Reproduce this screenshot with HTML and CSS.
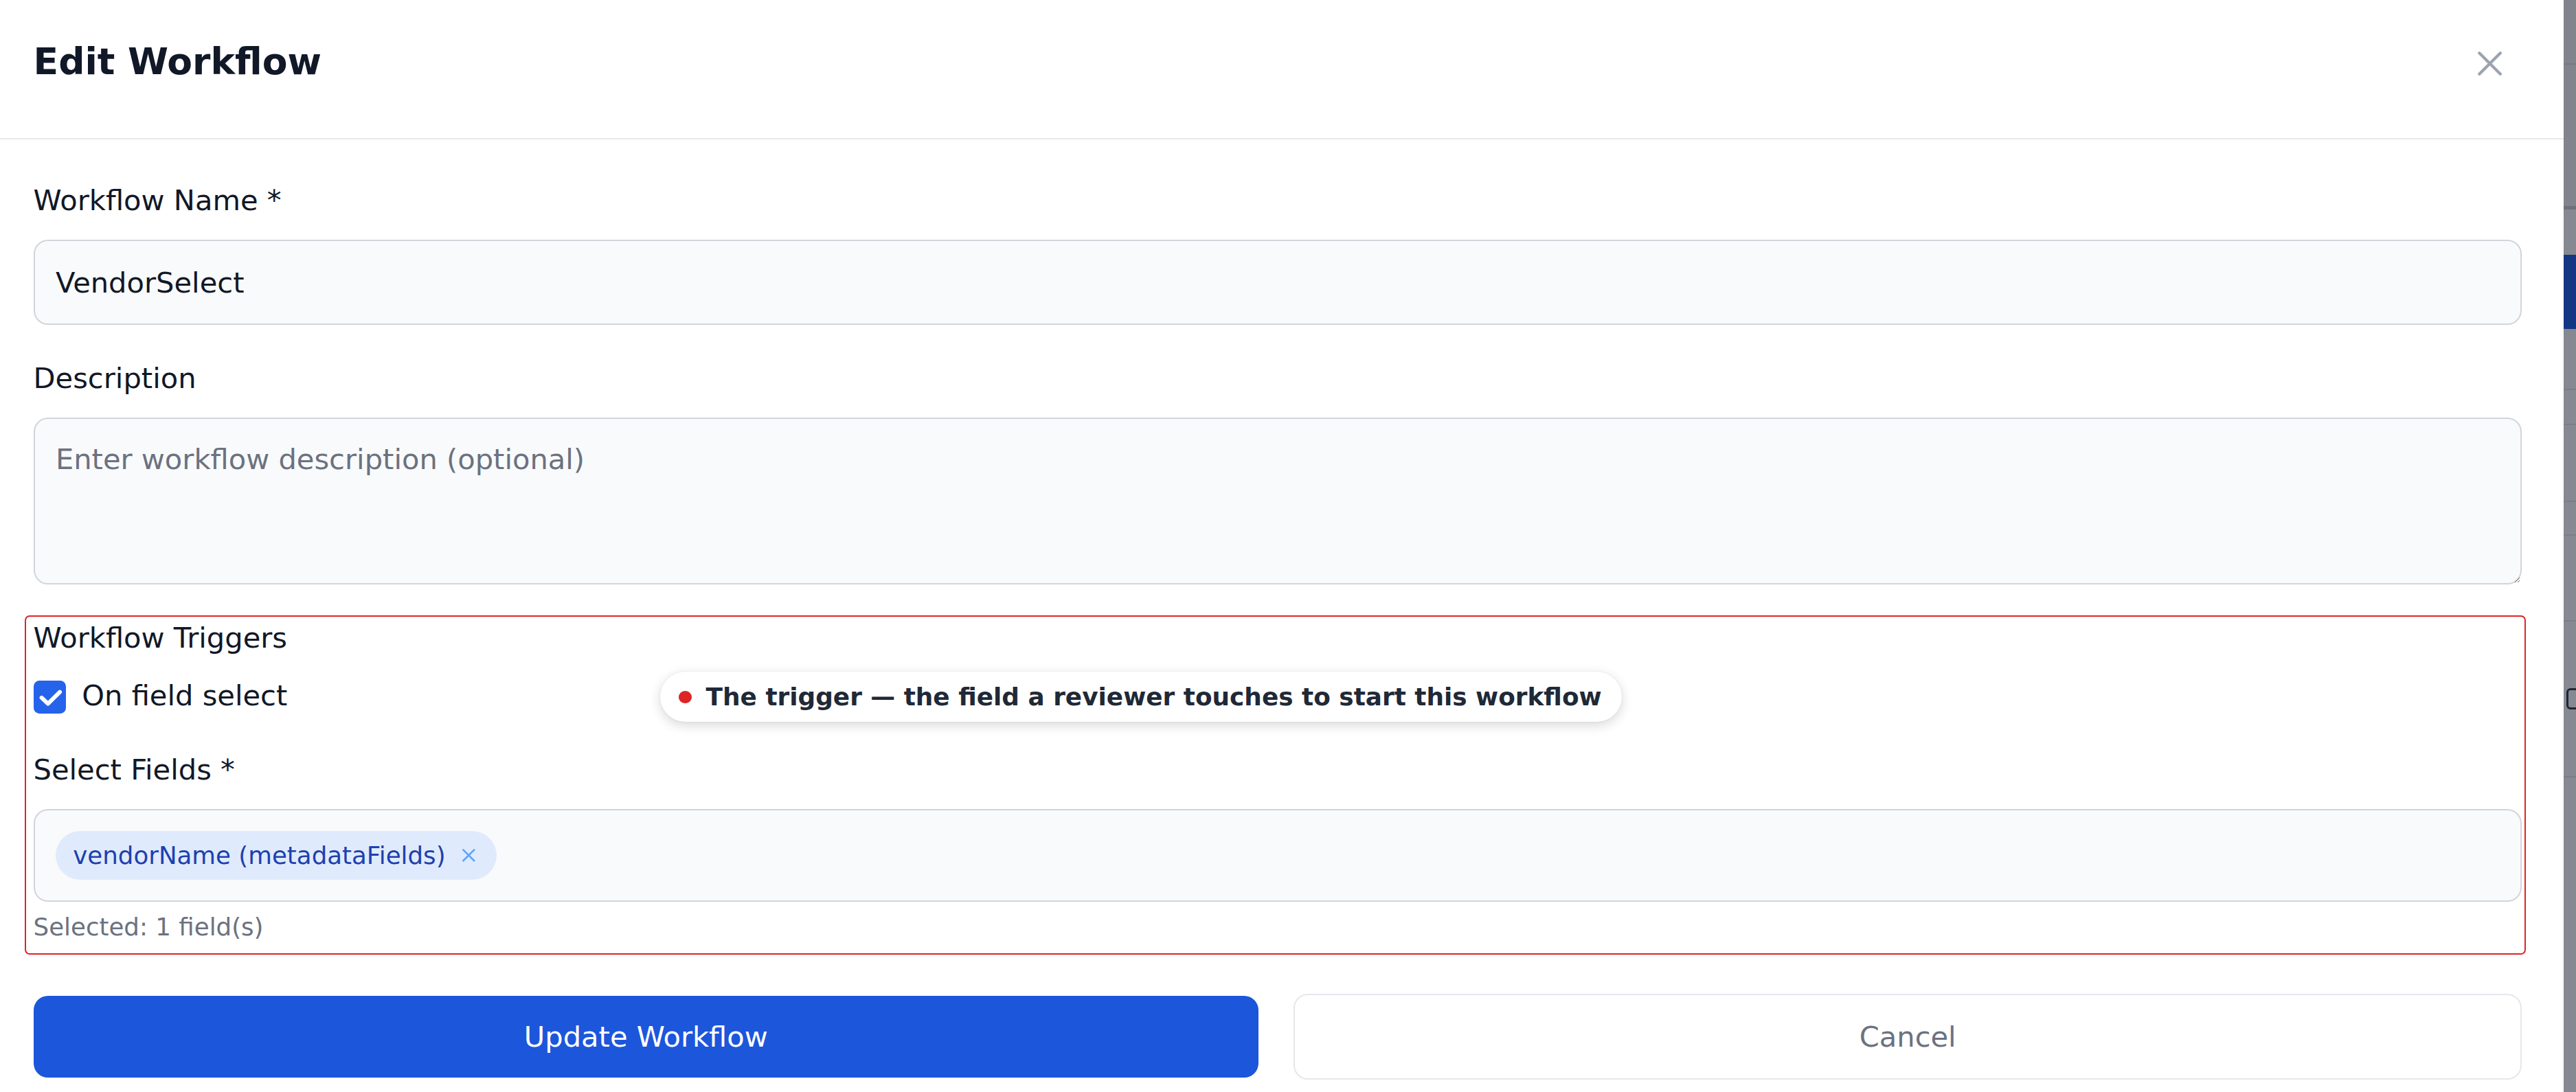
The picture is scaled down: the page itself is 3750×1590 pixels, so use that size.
FILE: index.html
```html
<!DOCTYPE html>
<html lang="en">
<head>
    <meta charset="UTF-8">
    <meta name="viewport" content="width=device-width, initial-scale=1.0">
    <title>Edit Workflow</title>
    <link rel="stylesheet" href="styles.css">
</head>
<body>
    <div class="screen">
        <div class="modal">
            <div class="modal-header">
                <h2>Edit Workflow</h2>
                <button class="close-btn" type="button" aria-label="Close">
                    <svg viewBox="0 0 15 15"><path d="M1 1L14 14M14 1L1 14"/></svg>
                </button>
            </div>

            <form class="modal-body">
                <div class="field">
                    <label class="field-label">Workflow Name *</label>
                    <input class="text-input" type="text" value="VendorSelect">
                </div>

                <div class="field">
                    <label class="field-label">Description</label>
                    <textarea class="text-input text-area" placeholder="Enter workflow description (optional)"></textarea>
                </div>

                <div class="triggers">
                    <div class="section-title">Workflow Triggers</div>
                    <div class="check-row">
                        <span class="checkbox">
                            <svg viewBox="0 0 20 20"><path d="M4.9 10.5L8.8 14.2L16.1 7"/></svg>
                        </span>
                        <span>On field select</span>
                        <div class="callout">
                            <span class="callout-dot"></span>
                            The trigger — the field a reviewer touches to start this workflow
                        </div>
                    </div>

                    <label class="field-label">Select Fields *</label>
                    <div class="multi-select">
                        <span class="chip">
                            vendorName (metadataFields)
                            <svg viewBox="0 0 9 9"><path d="M0.7 0.7L8.3 8.3M8.3 0.7L0.7 8.3"/></svg>
                        </span>
                    </div>
                    <p class="hint">Selected: 1 field(s)</p>
                </div>

                <div class="actions">
                    <button class="btn btn-primary" type="button">Update Workflow</button>
                    <button class="btn btn-secondary" type="button">Cancel</button>
                </div>
            </form>
        </div>

        <div class="backdrop">
            <div class="bp bp-top"></div>
            <div class="bp bp-rule"></div>
            <div class="bp bp-gap"></div>
            <div class="bp bp-bar"></div>
            <div class="bp bp-row" style="height: 37.4px"></div>
            <div class="bp bp-row" style="height: 21.3px"></div>
            <div class="bp bp-row" style="height: 47px"></div>
            <div class="bp bp-row" style="height: 20.2px"></div>
            <div class="bp bp-row" style="height: 52.3px"></div>
            <div class="bp bp-row bp-icon-row"><span class="bp-icon"></span></div>
        </div>
    </div>
</body>
</html>
```

FILE: styles.css
```css
* {
    box-sizing: border-box;
}

html {
    zoom: 2.3915;
}

body {
    margin: 0;
    font-family: "DejaVu Sans", "Noto Sans", sans-serif;
    color: #111827;
    background: #fff;
}

.screen {
    display: flex;
    height: 665px;
    overflow: hidden;
}

.modal {
    width: 1560.7px;
    flex-shrink: 0;
    background: #fff;
}

.modal-header {
    display: flex;
    align-items: center;
    justify-content: space-between;
    height: 85px;
    padding: 0 37.9px 8.6px 20.3px;
    border-bottom: 1px solid #e5e7eb;
}

.modal-header h2 {
    margin: 0;
    font-size: 22.4px;
    line-height: 30px;
    font-weight: 700;
    color: #111827;
}

.close-btn {
    display: block;
    width: 14.7px;
    height: 14.7px;
    margin-top: 2px;
    padding: 0;
    border: 0;
    background: none;
    cursor: pointer;
}

.close-btn svg {
    display: block;
    width: 100%;
    height: 100%;
    fill: none;
    stroke: #9ca3af;
    stroke-width: 1.8;
    stroke-linecap: round;
}

.modal-body {
    padding: 24.2px 25.7px 0 20.3px;
}

.field {
    margin-bottom: 19.6px;
}

.field-label {
    display: block;
    margin-bottom: 10.8px;
    font-size: 17.4px;
    line-height: 26.1px;
}

.text-input {
    display: block;
    width: 100%;
    height: 51.6px;
    padding: 11.7px 12.7px;
    font-family: inherit;
    font-size: 17.4px;
    line-height: 26.1px;
    color: #111827;
    background: #f9fafb;
    border: 1px solid #d1d5db;
    border-radius: 8.7px;
    outline: none;
}

.text-input::placeholder {
    color: #6b7280;
    opacity: 1;
}

.text-area {
    height: 101.8px;
    resize: vertical;
}

/* trigger section, boxed in red */
.triggers {
    position: relative;
}

.triggers::after {
    content: "";
    position: absolute;
    top: -1px;
    bottom: -5.9px;
    left: -5.3px;
    right: -2.5px;
    border: 1.2px solid #e02424;
    border-radius: 3px;
    pointer-events: none;
}

.section-title {
    margin-bottom: 9px;
    font-size: 17.4px;
    line-height: 26.1px;
}

.check-row {
    position: relative;
    display: flex;
    align-items: center;
    gap: 9.8px;
    height: 26.1px;
    margin-bottom: 19px;
    font-size: 17.4px;
    line-height: 26.1px;
}

.checkbox {
    display: flex;
    align-items: center;
    justify-content: center;
    width: 19.8px;
    height: 19.8px;
    margin-top: 1.3px;
    background: #2563eb;
    border-radius: 3.5px;
}

.checkbox svg {
    width: 100%;
    height: 100%;
    fill: none;
    stroke: #fff;
    stroke-width: 2.5;
    stroke-linecap: round;
    stroke-linejoin: round;
}

.callout {
    position: absolute;
    left: 381.5px;
    top: -1.7px;
    display: flex;
    align-items: center;
    gap: 8.8px;
    height: 30.7px;
    padding: 0 12.4px 0 11.5px;
    background: #fff;
    border-radius: 16px;
    box-shadow: 0 2px 7px rgba(0, 0, 0, 0.16), 0 0 1px rgba(0, 0, 0, 0.08);
    font-size: 15px;
    font-weight: 700;
    color: #1f2937;
    white-space: nowrap;
}

.callout-dot {
    width: 7.6px;
    height: 7.6px;
    border-radius: 50%;
    background: #dc2626;
}

.multi-select {
    display: flex;
    flex-wrap: wrap;
    gap: 6px;
    padding: 12.4px 12.7px;
    background: #f9fafb;
    border: 1px solid #d1d5db;
    border-radius: 8.7px;
}

.chip {
    display: inline-flex;
    align-items: center;
    gap: 9.7px;
    height: 29.8px;
    padding: 0 12.9px 0 10.6px;
    background: #dfebfd;
    border-radius: 15px;
    font-size: 14.9px;
    color: #1e40af;
}

.chip svg {
    width: 8.6px;
    height: 8.6px;
    fill: none;
    stroke: #60a5fa;
    stroke-width: 1.2;
}

.hint {
    margin: 4.5px 0 0;
    font-size: 14.9px;
    line-height: 21.7px;
    color: #6b7280;
}

.actions {
    display: flex;
    align-items: center;
    gap: 21.5px;
    margin-top: 29.8px;
}

.btn {
    flex: 1;
    font-family: inherit;
    font-size: 17.4px;
    border-radius: 8.7px;
    cursor: pointer;
}

.btn-primary {
    height: 49.7px;
    border: 0;
    background: #1c56db;
    color: #fff;
}

.btn-secondary {
    height: 52.2px;
    border: 1px solid #e5e7eb;
    background: #fff;
    color: #6b7280;
}

/* page behind the modal, under the dim overlay */
.backdrop {
    flex: 1;
    background: #868991;
}

.bp-top {
    height: 125.5px;
    background: #81848c;
    border-top: 38.5px solid #81848c;
    box-shadow: inset 0 1px 0 #787b83;
}

.bp-rule {
    height: 2px;
    background: #6e7179;
}

.bp-gap {
    height: 27.8px;
}

.bp-bar {
    height: 44.8px;
    background: #133784;
    box-shadow: inset -2px 0 0 rgba(255, 255, 255, 0.25);
}

.bp-row {
    border-bottom: 1px solid #7b7e86;
}

.bp-icon-row {
    height: 95px;
    padding-top: 40.7px;
}

.bp-icon {
    display: block;
    width: 13px;
    height: 13px;
    margin-left: 1.5px;
    border: 1.4px solid #1f2636;
    border-radius: 2.5px;
}
```
